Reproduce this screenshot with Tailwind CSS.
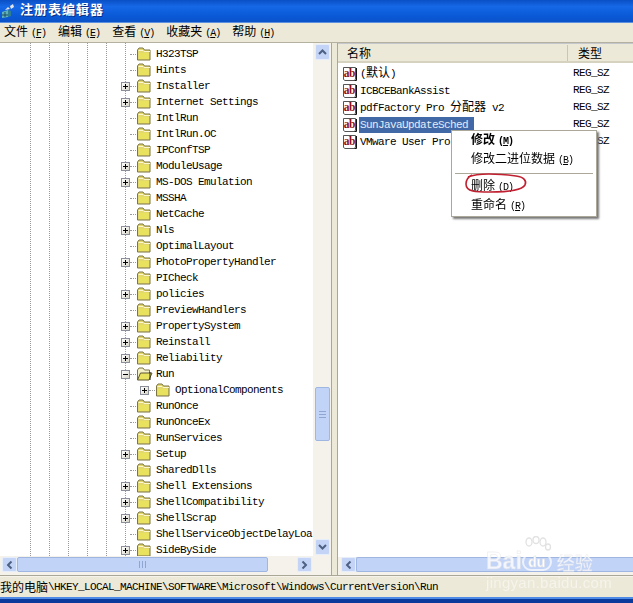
<!DOCTYPE html>
<html lang="zh-CN">

<head>
	<meta charset="UTF-8">
	<title>注册表编辑器</title>
	<script src="https://cdn.jsdelivr.net/npm/@tailwindcss/browser@4"></script>
</head>

<body class="bg-[#ece9d8] overflow-hidden">
	<svg class="hidden">
		<symbol id="folder" viewBox="0 0 15 14">
			<path d="M1.500 13V3l1.500-2h4l1.500 2h5.500v10z" fill="#e2d86c" stroke="#7c7444" />
			<path d="M2.500 3.500h4.500l1 1h6" fill="none" stroke="#fbf6d0" />
			<path d="M3 6h10v6h-10z" fill="#e8e25e" />
		</symbol>
		<symbol id="folderOpen" viewBox="0 0 17 14">
			<path d="M1.500 13V3l1.500-2h4l1.500 2h5v3" fill="#f4f0c8" stroke="#7c7444" />
			<path d="M1.500 13l3-7h11.500l-3 7z" fill="#e8e25e" stroke="#5c5630" />
			<path d="M14 5v8" stroke="#222" />
		</symbol>
		<symbol id="abIcon" viewBox="0 0 16 16">
			<path d="M1.500 1.500h12v11.500l-1 1.500h-9.500l-1.500-1z" fill="#fff" stroke="#555" />
			<path d="M14.500 2v12.500h-2" fill="none" stroke="#111" />
			<text x="1.800" y="11" font-family="Liberation Serif" font-weight="bold" font-size="11.500" fill="#8c1010">ab</text>
		</symbol>
		<symbol id="arrowUp" viewBox="0 0 9 6">
			<path d="M1 5l3.500-3.500L8 5" fill="none" stroke="#4d6185" stroke-width="2" />
		</symbol>
	</svg>

	<div class="w-[633px] h-[603px] flex flex-col [font-family:'Liberation_Mono','Noto_Sans_CJK_SC',monospace] text-[11px] tracking-[-0.6px] text-black">
		<!-- title bar -->
		<div class="h-[23px] flex items-center gap-[3px] pl-[1px] bg-[linear-gradient(#0a4fc4,#1668e6_30%,#0a5ad8_70%,#0b52c8)] border-b border-[#5b8fe0]">
			<svg width="16" height="16" viewBox="0 0 16 16">
				<path d="M1 9l6-2v7l-6 1z" fill="#5fb0b8" />
				<path d="M7 7l3 1v5l-3 1z" fill="#2f7f90" />
				<path d="M4 7l3-3 2 2M9 3l3-2 1 3-3 2z" fill="#e6e6e6" />
				<path d="M1 12h6M4 9v5" stroke="#1d4f60" />
			</svg>
			<span class="text-white font-bold text-[13px] tracking-[1px] [text-shadow:1px_1px_0_#0a2f80]">注册表编辑器</span>
		</div>

		<!-- menu bar -->
		<div class="h-[20px] flex items-center gap-[12px] pl-[4px] border-b border-[#b4b1a0] text-[12px] tracking-normal">
			<span>文件<span class="ml-[3px] text-[10px] tracking-[-1px]">(<u>F</u>)</span></span>
			<span>编辑<span class="ml-[3px] text-[10px] tracking-[-1px]">(<u>E</u>)</span></span>
			<span>查看<span class="ml-[3px] text-[10px] tracking-[-1px]">(<u>V</u>)</span></span>
			<span>收藏夹<span class="ml-[3px] text-[10px] tracking-[-1px]">(<u>A</u>)</span></span>
			<span>帮助<span class="ml-[3px] text-[10px] tracking-[-1px]">(<u>H</u>)</span></span>
		</div>

		<div class="h-[533px] flex border-b border-[#a9a797]">
			<!-- tree pane -->
			<div class="w-[332px] flex flex-col bg-white border-r border-[#a9a797]">
				<div class="h-[513px] flex">
					<div class="w-[314px] relative overflow-hidden">
						<div class="absolute inset-0 flex pl-[30px]">
							<div class="w-[19px] border-l border-dotted border-[#999]"></div>
							<div class="w-[19px] border-l border-dotted border-[#999]"></div>
							<div class="w-[19px] border-l border-dotted border-[#999]"></div>
							<div class="w-[19px] border-l border-dotted border-[#999]"></div>
							<div class="w-[19px] border-l border-dotted border-[#999]"></div>
							<div class="w-[19px] border-l border-dotted border-[#999]"></div>
						</div>
						<div id="tree" class="relative pt-[3px]"></div>
					</div>
					<!-- vertical scrollbar -->
					<div class="w-[18px] flex flex-col items-center bg-[#f4f2ea] py-[1px]">
						<div class="w-[15px] h-[16px] rounded-[2px] bg-[#c4d4f6] border border-[#e6eefc] flex items-center justify-center">
							<svg width="9" height="6"><use href="#arrowUp" /></svg>
						</div>
						<div class="flex-1 w-[15px] pt-[327px] pb-[98px]">
							<div class="h-full rounded-[2px] bg-[#c2d3f8] border border-[#9fb6e0] flex items-center justify-center">
								<div class="w-[7px] h-[7px] bg-[repeating-linear-gradient(#8fa6d0_0_1px,transparent_1px_3px)]"></div>
							</div>
						</div>
						<div class="w-[15px] h-[16px] rounded-[2px] bg-[#c4d4f6] border border-[#e6eefc] flex items-center justify-center">
							<svg width="9" height="6" class="rotate-180"><use href="#arrowUp" /></svg>
						</div>
					</div>
				</div>
				<!-- tree horizontal scrollbar -->
				<div class="h-[19px] flex items-start bg-[#f4f2ea] pl-[2px] pr-[19px] pt-[1px]">
					<div class="w-[15px] h-[15px] rounded-[2px] bg-[#c4d4f6] border border-[#e6eefc] flex items-center justify-center">
						<svg width="9" height="6" class="-rotate-90"><use href="#arrowUp" /></svg>
					</div>
					<div class="w-[251px] h-[15px] rounded-[2px] bg-[#c2d3f8] border border-[#9fb6e0] flex items-center justify-center">
						<div class="w-[7px] h-[7px] bg-[repeating-linear-gradient(90deg,#8fa6d0_0_1px,transparent_1px_3px)]"></div>
					</div>
					<div class="flex-1"></div>
					<div class="w-[15px] h-[15px] rounded-[2px] bg-[#c4d4f6] border border-[#e6eefc] flex items-center justify-center">
						<svg width="9" height="6" class="rotate-90"><use href="#arrowUp" /></svg>
					</div>
				</div>
			</div>

			<div class="w-[5px]"></div>

			<!-- list pane -->
			<div class="flex-1 flex flex-col bg-white border-l border-[#a9a797] relative">
				<div class="h-[20px] flex bg-[#ece9d8] border-t border-[#c4c8cc] border-b-2 border-b-[#d6d2c0] text-[12px] tracking-normal">
					<div class="w-[230px] pl-[9px] pt-[4px] border-r border-[#c9c6b4] mt-[1px] flex items-center">名称</div>
					<div class="pl-[10px] pt-[5px] flex items-center">类型</div>
				</div>
				<div id="values" class="flex-1 pt-[2px]"></div>
				<!-- list horizontal scrollbar -->
				<div class="h-[18px] flex items-start bg-[#f4f2ea] pl-[3px]">
					<div class="w-[15px] h-[15px] rounded-[2px] bg-[#c4d4f6] border border-[#e6eefc] flex items-center justify-center">
						<svg width="9" height="6" class="-rotate-90"><use href="#arrowUp" /></svg>
					</div>
					<div class="flex-1 h-[15px] rounded-l-[2px] bg-[#c2d3f8] border border-r-0 border-[#9fb6e0]"></div>
				</div>
			</div>
		</div>

		<!-- status bar -->
		<div class="h-[21px] flex items-center whitespace-nowrap border-t border-[#f6f4ea]">
			<span class="[font-family:'Noto_Sans_CJK_SC'] text-[12px] tracking-normal">我的电脑</span><span>\HKEY_LOCAL_MACHINE\SOFTWARE\Microsoft\Windows\CurrentVersion\Run</span>
		</div>
		<div class="flex-1 bg-[#0a3a9c] border-t-2 border-[#4f8ae6]"></div>
	</div>

	<!-- context menu -->
	<div class="fixed left-[451px] top-[130px] w-[146px] h-[87px] bg-white border border-[#aca899] shadow-[2px_2px_2px_#777] [font-family:'Liberation_Mono','Noto_Sans_CJK_SC',monospace] text-[12px] text-black pl-[19px] pt-[1px] leading-[18px]">
		<div class="font-bold">修改<span class="ml-[3px] text-[10px] tracking-[-1px]">(<u>M</u>)</span></div>
		<div>修改二进位数据<span class="ml-[3px] text-[10px] tracking-[-1px]">(<u>B</u>)</span></div>
		<div class="h-[4px] -ml-[16px] mr-[3px] border-b border-[#aca899] mb-[4px]"></div>
		<div>删除<span class="ml-[3px] text-[10px] tracking-[-1px]">(<u>D</u>)</span></div>
		<div>重命名<span class="ml-[3px] text-[10px] tracking-[-1px]">(<u>R</u>)</span></div>
	</div>

	<!-- red marker circle -->
	<svg class="fixed left-[460px] top-[170px]" width="72" height="30" viewBox="0 0 72 30">
		<path d="M8 7C20 2 40 4 56 6c8 1 11 5 9 9-3 5-18 7-35 7-14 0-24 0-24-8 0-4 2-7 6-9" fill="none" stroke="#c02030" stroke-width="1.600" />
	</svg>

	<!-- watermark -->
	<svg class="fixed left-[522px] top-[536px]" width="30" height="20" viewBox="0 0 30 20">
		<g fill="none" stroke="#e2e2e2" stroke-width="1.300">
			<ellipse cx="7" cy="6" rx="3" ry="4" />
			<ellipse cx="14" cy="4" rx="3" ry="3.500" />
			<ellipse cx="21" cy="6" rx="3" ry="4" />
			<ellipse cx="26" cy="11" rx="2.500" ry="3" />
		</g>
	</svg>
	<div class="fixed left-[486px] top-[551px] w-[112px] flex flex-col text-white [font-family:'Liberation_Sans',sans-serif] leading-none">
		<div class="flex items-center h-[21px]">
			<span class="text-[23px] font-bold opacity-80 [-webkit-text-stroke:0.5px_#e2e2e2]">Bai</span>
			<span class="w-[30px] h-[18px] rounded-full border-2 border-white/70 text-[14px] font-bold flex items-center justify-center [-webkit-text-stroke:0.5px_#e2e2e2]">du</span>
			<span class="ml-[5px] text-[18px] opacity-80 [font-family:'Noto_Sans_CJK_SC'] [-webkit-text-stroke:0.3px_#e2e2e2]">经验</span>
		</div>
		<div class="mt-[3px] text-[15px] tracking-[0.3px] text-white/50">jingyan.baidu.com</div>
	</div>

	<script>
		const treeRows = [
			['H323TSP'], ['Hints'], ['Installer', '+'], ['Internet Settings', '+'], ['IntlRun'], ['IntlRun.OC'],
			['IPConfTSP'], ['ModuleUsage', '+'], ['MS-DOS Emulation', '+'], ['MSSHA'], ['NetCache'], ['Nls', '+'],
			['OptimalLayout'], ['PhotoPropertyHandler', '+'], ['PICheck'], ['policies', '+'], ['PreviewHandlers'],
			['PropertySystem', '+'], ['Reinstall', '+'], ['Reliability', '+'], ['Run', '-'],
			['OptionalComponents', '+', true], ['RunOnce'], ['RunOnceEx'], ['RunServices'], ['Setup', '+'], ['SharedDlls'],
			['Shell Extensions', '+'], ['ShellCompatibility', '+'], ['ShellScrap', '+'], ['ShellServiceObjectDelayLoa'], ['SideBySide', '+']
		];
		const values = [
			['(<span class="text-[12px] tracking-normal">默认</span>)', false], ['ICBCEBankAssist', false],
			['pdfFactory Pro <span class="text-[12px] tracking-normal">分配器</span> v2', false],
			['SunJavaUpdateSched', true], ['VMware User Pro', false]
		];

		function expander(sign) {
			if (!sign) return '<span class="w-[9px] h-[9px]"></span>';
			const vert = sign === '+' ? '<span class="absolute left-[3px] top-[1px] w-[1px] h-[5px] bg-black"></span>' : '';
			return `<span class="relative w-[9px] h-[9px] border border-[#8a8f9a] bg-[linear-gradient(135deg,#fff,#d8d5c8)]"><span class="absolute left-[1px] top-[3px] w-[5px] h-[1px] bg-black"></span>${vert}</span>`;
		}

		document.getElementById('tree').innerHTML = treeRows.map(([name, sign, nested]) => `
			<div class="h-4 flex items-center whitespace-nowrap ${nested ? 'pl-[140px]' : 'pl-[121px]'}">
				${expander(sign)}
				<span class="w-[6px] border-t border-dotted border-[#999]"></span>
				<svg class="${sign === '-' ? 'w-[17px]' : 'w-[15px]'} h-[14px] bg-white"><use href="${sign === '-' ? '#folderOpen' : '#folder'}" /></svg>
				<span class="${sign === '-' ? 'ml-[3px]' : 'ml-[5px]'} bg-white">${name}</span>
			</div>`).join('');

		document.getElementById('values').innerHTML = values.map(([name, selected]) => `
			<div class="h-[17px] flex items-center whitespace-nowrap pl-[4px]">
				<svg class="w-4 h-4"><use href="#abIcon" /></svg>
				<span class="ml-[1px] w-[215px] flex">
					<span class="px-[1px] leading-[16px] ${selected ? 'bg-[#4169a8] text-[#e4ecf8] pr-[6px]' : ''}">${name}</span>
				</span>
				<span class="ml-[-1px]">REG_SZ</span>
			</div>`).join('');
	</script>
</body>

</html>
